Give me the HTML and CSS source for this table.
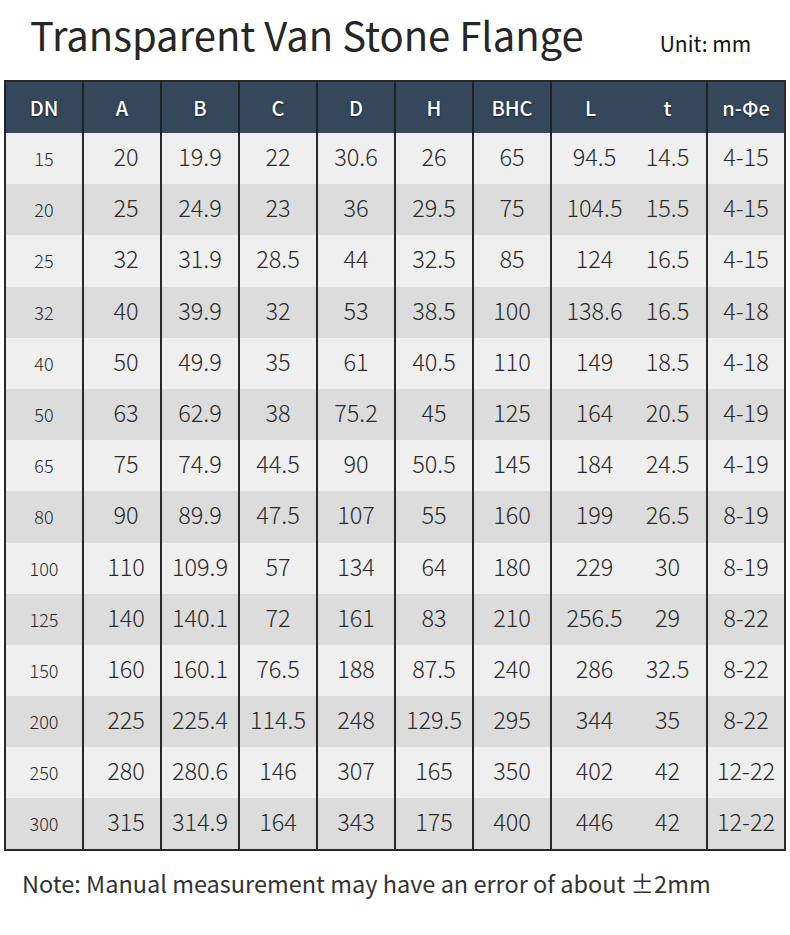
FILE: index.html
```html
<!DOCTYPE html>
<html>
<head>
<meta charset="utf-8">
<link rel="stylesheet" href="styles.css">
</head>
<body>
<div class="page">
  <div class="head">
    <h1 class="title">Transparent Van Stone Flange</h1>
    <div class="unit">Unit: mm</div>
  </div>
  <table class="spec">
    <thead>
      <tr><th>DN</th><th>A</th><th>B</th><th>C</th><th>D</th><th>H</th><th>BHC</th><th class="nb">L</th><th>t</th><th>n-Φe</th></tr>
    </thead>
    <tbody>
      <tr><td class="dn">15</td><td class="sh">20</td><td>19.9</td><td>22</td><td>30.6</td><td>26</td><td>65</td><td class="nb sh">94.5</td><td>14.5</td><td>4-15</td></tr>
      <tr><td class="dn">20</td><td class="sh">25</td><td>24.9</td><td>23</td><td>36</td><td>29.5</td><td>75</td><td class="nb sh">104.5</td><td>15.5</td><td>4-15</td></tr>
      <tr><td class="dn">25</td><td class="sh">32</td><td>31.9</td><td>28.5</td><td>44</td><td>32.5</td><td>85</td><td class="nb sh">124</td><td>16.5</td><td>4-15</td></tr>
      <tr><td class="dn">32</td><td class="sh">40</td><td>39.9</td><td>32</td><td>53</td><td>38.5</td><td>100</td><td class="nb sh">138.6</td><td>16.5</td><td>4-18</td></tr>
      <tr><td class="dn">40</td><td class="sh">50</td><td>49.9</td><td>35</td><td>61</td><td>40.5</td><td>110</td><td class="nb sh">149</td><td>18.5</td><td>4-18</td></tr>
      <tr><td class="dn">50</td><td class="sh">63</td><td>62.9</td><td>38</td><td>75.2</td><td>45</td><td>125</td><td class="nb sh">164</td><td>20.5</td><td>4-19</td></tr>
      <tr><td class="dn">65</td><td class="sh">75</td><td>74.9</td><td>44.5</td><td>90</td><td>50.5</td><td>145</td><td class="nb sh">184</td><td>24.5</td><td>4-19</td></tr>
      <tr><td class="dn">80</td><td class="sh">90</td><td>89.9</td><td>47.5</td><td>107</td><td>55</td><td>160</td><td class="nb sh">199</td><td>26.5</td><td>8-19</td></tr>
      <tr><td class="dn">100</td><td class="sh">110</td><td>109.9</td><td>57</td><td>134</td><td>64</td><td>180</td><td class="nb sh">229</td><td>30</td><td>8-19</td></tr>
      <tr><td class="dn">125</td><td class="sh">140</td><td>140.1</td><td>72</td><td>161</td><td>83</td><td>210</td><td class="nb sh">256.5</td><td>29</td><td>8-22</td></tr>
      <tr><td class="dn">150</td><td class="sh">160</td><td>160.1</td><td>76.5</td><td>188</td><td>87.5</td><td>240</td><td class="nb sh">286</td><td>32.5</td><td>8-22</td></tr>
      <tr><td class="dn">200</td><td class="sh">225</td><td>225.4</td><td>114.5</td><td>248</td><td>129.5</td><td>295</td><td class="nb sh">344</td><td>35</td><td>8-22</td></tr>
      <tr><td class="dn">250</td><td class="sh">280</td><td>280.6</td><td>146</td><td>307</td><td>165</td><td>350</td><td class="nb sh">402</td><td>42</td><td>12-22</td></tr>
      <tr><td class="dn">300</td><td class="sh">315</td><td>314.9</td><td>164</td><td>343</td><td>175</td><td>400</td><td class="nb sh">446</td><td>42</td><td>12-22</td></tr>
    </tbody>
  </table>
  <p class="note">Note: Manual measurement may have an error of about ±2mm</p>
</div>
</body>
</html>
```

FILE: styles.css
```css
html, body {
  margin: 0;
  padding: 0;
  background: #ffffff;
}

.page {
  width: 790px;
  height: 935px;
  font-family: "Noto Sans CJK SC", "Noto Sans", sans-serif;
  color: #222222;
}

.head {
  display: flex;
  align-items: flex-end;
  padding: 0 0 0 30px;
  height: 80px;
  box-sizing: border-box;
}

.title {
  margin: 0 0 26px 0;
  font-size: 40px;
  font-weight: 400;
  line-height: 1;
  color: #262626;
}

.unit {
  margin: 0 0 26px 76px;
  font-size: 21px;
  line-height: 1;
  color: #111111;
}

.spec {
  margin-left: 4px;
  width: 782px;
  border-collapse: collapse;
  table-layout: fixed;
  border: 2px solid #2a2a2a;
}

.spec thead tr {
  height: 52px;
}

.spec th {
  background: #35475a;
  color: #ffffff;
  font-weight: 500;
  font-size: 20px;
  padding: 0;
  line-height: 24px;
  text-align: center;
  vertical-align: middle;
  border-left: 2px solid #1e2125;
  text-shadow: 0 1px 2px rgba(0, 0, 0, 0.6);
}

.spec tbody tr {
  height: 51.2px;
}

.spec td {
  padding: 0 0 5px 0;
  text-align: center;
  vertical-align: middle;
  font-size: 23.5px;
  font-weight: 300;
  line-height: 26px;
  color: #2a2a2a;
  border-left: 2px solid #2a2a2a;
}

.spec td.dn {
  font-size: 18px;
  padding-top: 4px;
}

.spec td.sh {
  padding-left: 8px;
}

.spec td.nb + td,
.spec th.nb + th {
  border-left: none;
}

.spec tbody tr:nth-child(odd) td {
  background: #efefef;
}

.spec tbody tr:nth-child(even) td {
  background: #dcdcdc;
}

.note {
  margin: 18px 0 0 22px;
  font-size: 23.5px;
  font-weight: 400;
  color: #333333;
  line-height: 1.2;
}
```
